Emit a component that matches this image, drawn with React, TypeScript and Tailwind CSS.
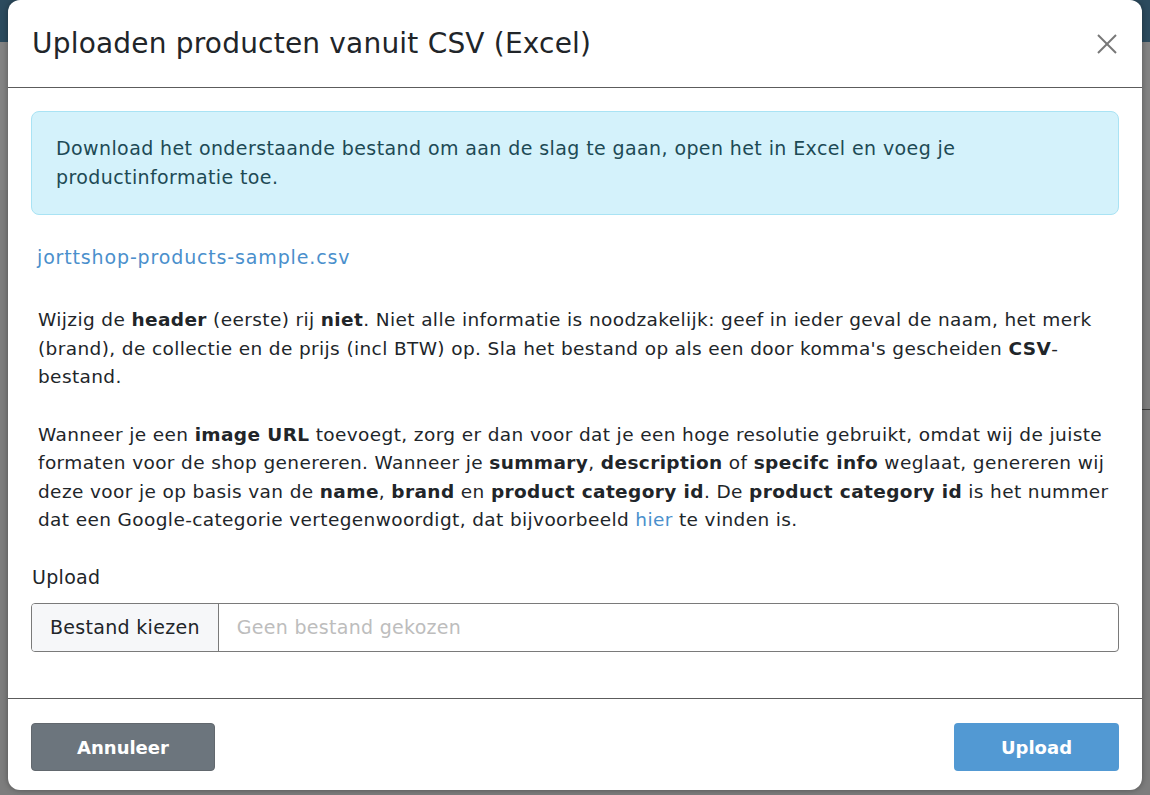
import React from 'react';

const font = { fontFamily: '"DejaVu Sans", "Liberation Sans", sans-serif' };

const CloseIcon = () => (
  <svg width="22" height="22" viewBox="0 0 22 22" fill="none" stroke="#777" strokeWidth="2">
    <line x1="2" y1="2" x2="20" y2="20" />
    <line x1="20" y1="2" x2="2" y2="20" />
  </svg>
);

const App = () => {
  return (
    <div className="relative h-[795px] w-[1150px] overflow-hidden bg-[#7d7d7d]" style={font}>
      {/* Page behind the backdrop */}
      <div className="h-[42px] bg-[#2c4b5e]" />
      <div className="h-[148px] bg-[#838383]" />
      <div className="flex justify-end">
        <div className="mt-[219px] h-px w-[8px] bg-[#3a3a3a]" />
      </div>

      {/* Modal */}
      <div className="absolute left-2 right-2 top-0 bottom-[5px] flex flex-col rounded-[12px] bg-white shadow-[0_0_6px_rgba(0,0,0,0.35)]">
        {/* Header */}
        <header className="flex h-[88px] items-center justify-between border-b border-[#5c5c5c] px-6">
          <h1 className="text-[28px] font-normal tracking-[0.2px] text-[#212529]">Uploaden producten vanuit CSV (Excel)</h1>
          <button className="p-0"><CloseIcon /></button>
        </header>

        {/* Body */}
        <div className="flex-1 px-[23px] pt-[23px] text-[19px] tracking-[0.3px] text-[#212529]">
          <div className="rounded-[8px] border border-[#a9e3f4] bg-[#d4f2fb] px-6 py-[22px] leading-[29px] tracking-[0.4px] text-[#1d4a55]">
            Download het onderstaande bestand om aan de slag te gaan, open het in Excel en voeg je<br />
            productinformatie toe.
          </div>

          <div className="mt-[28px] pl-[6px] leading-[28px] tracking-[0.85px]">
            <a className="text-[#4a8fcc]">jorttshop-products-sample.csv</a>
          </div>

          <p className="mt-[35px] pl-[7px] text-[18.5px] leading-[28.5px] tracking-[0.38px] whitespace-nowrap">
            Wijzig de <b>header</b> (eerste) rij <b>niet</b>. Niet alle informatie is noodzakelijk: geef in ieder geval de naam, het merk<br />
            (brand), de collectie en de prijs (incl BTW) op. Sla het bestand op als een door komma's gescheiden <b>CSV</b>-<br />
            bestand.
          </p>

          <p className="mt-[29px] pl-[7px] text-[18.5px] leading-[28.5px] tracking-[0.38px] whitespace-nowrap">
            Wanneer je een <b>image URL</b> toevoegt, zorg er dan voor dat je een hoge resolutie gebruikt, omdat wij de juiste<br />
            formaten voor de shop genereren. Wanneer je <b>summary</b>, <b>description</b> of <b>specifc info</b> weglaat, genereren wij<br />
            deze voor je op basis van de <b>name</b>, <b>brand</b> en <b>product category id</b>. De <b>product category id</b> is het nummer<br />
            dat een Google-categorie vertegenwoordigt, dat bijvoorbeeld <a className="text-[#4a8fcc]">hier</a> te vinden is.
          </p>

          <label className="mt-[28px] block pl-[1px] leading-[28px]">Upload</label>

          <div className="mt-[12px] flex h-[49px] overflow-hidden rounded-[4px] border border-[#7a7a7a]">
            <div className="flex items-center border-r border-[#7a7a7a] bg-[#f6f7f9] px-[18px]">Bestand kiezen</div>
            <div className="flex items-center px-[18px] text-[#bdbdbd]">Geen bestand gekozen</div>
          </div>
        </div>

        {/* Footer */}
        <footer className="flex items-center justify-between border-t border-[#5c5c5c] px-[23px] pt-[24px] pb-[19px]">
          <button className="h-[48px] w-[184px] rounded-[4px] border border-[#62686e] bg-[#6c757d] text-[18px] font-bold text-white">Annuleer</button>
          <button className="h-[48px] w-[165px] rounded-[4px] bg-[#5299d3] text-[18px] font-bold text-white">Upload</button>
        </footer>
      </div>
    </div>
  );
};

export default App;
